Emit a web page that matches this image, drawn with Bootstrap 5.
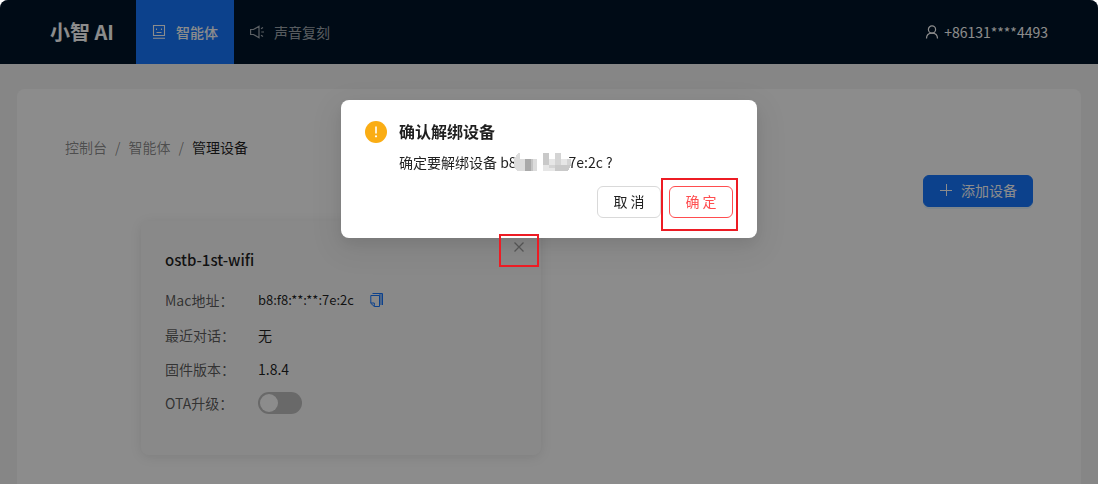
<!DOCTYPE html>
<html lang="zh-CN">
<head>
<meta charset="utf-8">
<meta name="viewport" content="width=device-width, initial-scale=1">
<title>管理设备 - 小智 AI</title>
<link rel="stylesheet" href="https://cdn.jsdelivr.net/npm/bootstrap@5.3.0/dist/css/bootstrap.min.css">
<style>
  html { background: #fff; }
  body { font-family: "Noto Sans CJK SC", sans-serif; font-size: 14px; line-height: 22px; color: rgba(0,0,0,.88); background: #fff; }
  a { text-decoration: none; }
  svg { display: block; flex: none; }
  .app-shell { background: #f5f5f5; border-radius: 8px 8px 0 0; overflow: hidden; }
  .topbar { height: 64px; background: #001529; padding: 0 50px; color: #fff; }
  .brand { font-size: 20px; font-weight: 700; color: #fff; margin-right: 22px; }
  .menu-link { height: 64px; padding: 0 16px; gap: 10px; color: rgba(255,255,255,.65); }
  .menu-link.active { background: #1677ff; color: #fff; font-weight: 500; }
  .panel { margin: 25px 17px 0; padding: 47px 48px 48px; background: #fff; border-radius: 8px; }
  .breadcrumb { --bs-breadcrumb-item-padding-x: 8px; --bs-breadcrumb-divider-color: rgba(0,0,0,.45); --bs-breadcrumb-margin-bottom: 17px; }
  .breadcrumb a { color: rgba(0,0,0,.45); }
  .breadcrumb .active { color: rgba(0,0,0,.88); }
  .btn { --bs-btn-font-size: 14px; --bs-btn-line-height: 20px; --bs-btn-padding-x: 15px; --bs-btn-border-radius: 6px; padding-top: 4px; padding-bottom: 6px; }
  .btn-primary { --bs-btn-bg: #1677ff; --bs-btn-border-color: #1677ff; box-shadow: 0 2px 0 rgba(5,145,255,.1); }
  .btn-cancel, .btn-danger-line { min-width: 64px; }
  .btn-cancel { --bs-btn-color: rgba(0,0,0,.88); --bs-btn-border-color: #d9d9d9; --bs-btn-bg: #fff; }
  .btn-danger-line { --bs-btn-color: #ff4d4f; --bs-btn-border-color: #ff4d4f; --bs-btn-bg: #fff; }
  .device-list { max-width: 816px; gap: 16px; margin-top: 14px; }
  .device { width: 400px; min-height: 234px; padding: 24px; border-radius: 8px; background: #fafafa; box-shadow: 0 2px 12px rgba(0,0,0,.1); }
  .device h2 { font-size: 15px; line-height: 30px; font-weight: 500; margin: 0 0 13px; }
  .device dl { display: grid; grid-template-columns: 93px 1fr; row-gap: 12px; margin: 0; align-items: center; }
  .device dt, .device dd { margin: 0; font-weight: 400; }
  .device dt { color: rgba(0,0,0,.65); }
  .device .mac { font-size: 13px; line-height: 24px; }
  .close-x { top: 16px; right: 12px; padding: 5px; border: 0; background: none; color: rgba(0,0,0,.35); }
  .copy-btn { padding: 0; border: 0; background: none; color: #1677ff; }
  .form-switch .form-check-input { width: 44px; height: 22px; margin: 0; border: 0; background-color: #bfbfbf; background-size: 22px; background-image: url("data:image/svg+xml,%3csvg xmlns='http://www.w3.org/2000/svg' viewBox='0 0 22 22'%3e%3ccircle cx='11' cy='11' r='9' fill='white'/%3e%3c/svg%3e"); }
  .modal-backdrop { --bs-backdrop-opacity: .45; border-radius: 8px 8px 0 0; width: 100%; height: 100%; }
  .confirm { max-width: 416px; margin: 100px auto 0; }
  .confirm .modal-content { border: 0; border-radius: 8px; padding: 20px 24px; box-shadow: 0 6px 16px rgba(0,0,0,.08), 0 9px 28px 8px rgba(0,0,0,.05); color: rgba(0,0,0,.88); }
  .confirm h1 { font-size: 16px; line-height: 22px; font-weight: 600; margin: 0 0 9px; }
  .confirm-actions { margin-top: 13px; }
  .mosaic { margin: 0 -3px; }
  .callout-box { border: 2px solid #ed1c24; pointer-events: none; }
  .callout-ok { width: 77px; height: 53px; right: -5px; top: -8px; }
  .callout-close { width: 40px; height: 33px; left: 158px; top: 134px; }
</style>
</head>
<body>
<div class="app-shell min-vh-100">
  <header class="topbar d-flex align-items-center">
    <a class="brand" href="#">小智 AI</a>
    <nav class="d-flex">
      <a class="menu-link active d-flex align-items-center" href="#">
        <svg width="14" height="14" viewBox="0 0 14 14" fill="none" stroke="currentColor" stroke-width="1.100"><path d="M1.500.5h11v10h-11zM1 13.300h12M4.500 7.500h5M4.500 3.500v1.500M9.500 3.500v1.500"/></svg>智能体</a>
      <a class="menu-link d-flex align-items-center" href="#">
        <svg width="14" height="14" viewBox="0 0 14 14" fill="none" stroke="currentColor" stroke-width="1.200"><path d="M.6 4.500v5h2.900l5.500 3.300V1.200L3.500 4.500zM11.300 7h2.700M11 3.800l2-1.300M11 10.200l2 1.300"/></svg>声音复刻</a>
    </nav>
    <a class="ms-auto d-flex align-items-center gap-1 text-white" href="#">
      <svg width="16" height="16" viewBox="0 0 16 16" fill="none" stroke="currentColor" stroke-width="1.200"><circle cx="8" cy="5.500" r="3.600"/><path d="M2.500 14.500c0-3.500 2.300-5.400 5.500-5.400s5.500 1.900 5.500 5.400"/></svg>+86131****4493</a>
  </header>

  <main class="panel">
    <nav aria-label="breadcrumb">
      <ol class="breadcrumb">
        <li class="breadcrumb-item"><a href="#">控制台</a></li>
        <li class="breadcrumb-item"><a href="#">智能体</a></li>
        <li class="breadcrumb-item active" aria-current="page">管理设备</li>
      </ol>
    </nav>
    <div class="d-flex justify-content-end">
      <button type="button" class="btn btn-primary d-flex align-items-center gap-2">
        <svg width="14" height="14" viewBox="0 0 14 14" stroke="currentColor"><path d="M7.500 1v12M1 7.500h12"/></svg>添加设备</button>
    </div>
    <div class="device-list d-flex flex-wrap mx-auto">
      <section class="device position-relative">
        <button type="button" class="close-x position-absolute" aria-label="解绑"><svg width="10" height="10" viewBox="0 0 10 10" stroke="currentColor" stroke-width="1.300"><path d="M.5.5l9 9M9.500.5l-9 9"/></svg></button>
        <h2>ostb-1st-wifi</h2>
        <dl>
          <dt>Mac地址：</dt>
          <dd class="mac d-flex align-items-center gap-3">b8:f8:**:**:7e:2c
            <button type="button" class="copy-btn" aria-label="复制"><svg width="14" height="14" viewBox="0 0 14 14" fill="none" stroke="currentColor"><path d="M9 1h3.500v11H9z" fill="currentColor" fill-opacity=".5" stroke="none"/><path d="M2.500.5h10V12M.8 2.500h8.700v11H4.300L.8 10.300zM.8 10h3.500v3.500"/></svg></button></dd>
          <dt>最近对话：</dt><dd>无</dd>
          <dt>固件版本：</dt><dd>1.8.4</dd>
          <dt><label for="ota">OTA升级：</label></dt>
          <dd class="form-switch p-0"><input class="form-check-input d-block float-none" type="checkbox" role="switch" id="ota"></dd>
        </dl>
      </section>
    </div>
  </main>
</div>

<div class="modal-backdrop show"></div>
<div class="modal d-block" role="dialog" aria-modal="true" aria-labelledby="confirm-title">
  <div class="modal-dialog confirm">
    <div class="modal-content">
      <div class="d-flex">
        <svg class="me-2" width="26" height="24" viewBox="0 0 26 24"><circle cx="11" cy="12" r="11" fill="#faad14"/><path d="M11 6.500v7" stroke="#fff" stroke-width="1.600"/><circle cx="11" cy="16.300" r="1.100" fill="#fff"/></svg>
        <div>
          <h1 id="confirm-title">确认解绑设备</h1>
          <div class="d-flex align-items-center"><span>确定要解绑设备 b8</span><svg class="mosaic" width="58" height="18" viewBox="0 0 58 18" shape-rendering="crispEdges">
            <path fill="#dcdcdc" d="M4 0h2v6h5v12H3L0 13V6zM18 6h5v12h-5z"/>
            <path fill="#a9a9a9" d="M11 6h6v12h-6z"/><path fill="#c4c4c4" d="M17 6h2v12h-2z"/>
            <path fill="#c9c9c9" d="M29 0h6v12h-6zM41 12h6v6h-6zM47 12h10l-3 6h-7z"/>
            <path fill="#e6e6e6" d="M29 12h12v6H29zM35 6h6v6h-6zM47 6h6v6h-6z"/>
            <path fill="#d4d4d4" d="M41 0h6v12h-6zM35 12h6v3h-6zM53 6h4v6h-4z"/>
          </svg><span>7e:2c ?</span></div>
        </div>
      </div>
      <div class="confirm-actions d-flex justify-content-end gap-2 position-relative">
        <button type="button" class="btn btn-cancel">取 消</button>
        <button type="button" class="btn btn-danger-line">确 定</button>
        <span class="callout-box callout-ok position-absolute"></span>
      </div>
      <span class="callout-box callout-close position-absolute"></span>
    </div>
  </div>
</div>
<script src="https://cdn.jsdelivr.net/npm/bootstrap@5.3.0/dist/js/bootstrap.bundle.min.js"></script>
</body>
</html>
